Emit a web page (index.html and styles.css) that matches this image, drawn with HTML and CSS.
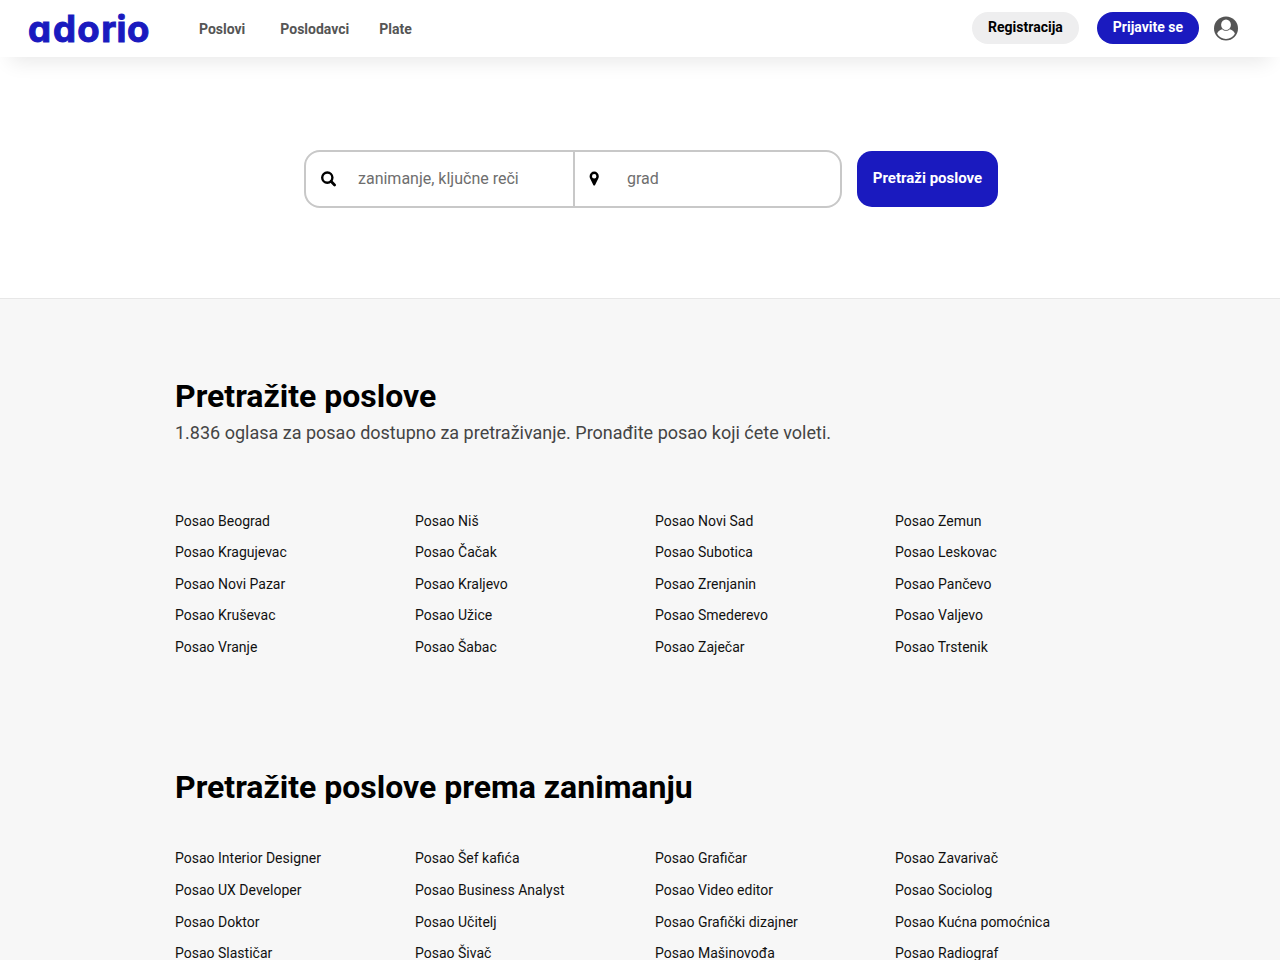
FILE: index.html
```html
<!DOCTYPE html>
<html lang="sr">
<head>
    <meta charset="UTF-8">
    <meta name="viewport" content="width=device-width, initial-scale=1.0">
    <title>Adorio - Poslovi</title>
    <link rel="stylesheet" href="styles.css">
</head>
<body>
    <header class="header">
        <a class="logo" href="#">
            <svg width="124" height="48" viewBox="0 0 124 48">
                <text class="logo-text" x="1.1 26 50.200 74.200 89.500 99.900" y="37.500">adorio</text>
            </svg>
        </a>
        <nav class="nav">
            <a class="nav-jobs" href="#">Poslovi</a>
            <a href="#">Poslodavci</a>
            <a href="#">Plate</a>
        </nav>
        <div class="account">
            <a class="pill pill-light" href="#">Registracija</a>
            <a class="pill pill-blue" href="#">Prijavite se</a>
            <svg class="avatar" width="24" height="25" viewBox="0 0 24 25">
                <circle cx="12" cy="12.4" r="12" fill="#555"/>
                <ellipse cx="12" cy="8.8" rx="4.9" ry="5.3" fill="#fff"/>
                <path d="M8.200 13.200c1.100 1 2.300 1.500 3.800 1.500s2.700-.5 3.800-1.500c2.600.7 4.600 2.400 5.100 4.600A10.400 10.400 0 0 1 12 22.900a10.400 10.400 0 0 1-8.900-5.100c.5-2.200 2.500-3.900 5.100-4.600z" fill="#fff"/>
            </svg>
        </div>
    </header>

    <section class="search">
        <form class="search-form">
            <div class="fields">
                <label class="field field-job">
                    <svg class="icon-search" width="16" height="16" viewBox="0 0 16 16">
                        <circle cx="6.300" cy="6.600" r="5.100" fill="none" stroke="#000" stroke-width="2.400"/>
                        <path d="M10 10.300l3.600 3.600" stroke="#000" stroke-width="2.800" stroke-linecap="round"/>
                    </svg>
                    <input type="text" placeholder="zanimanje, ključne reči">
                </label>
                <label class="field field-city">
                    <svg class="icon-pin" width="10" height="16" viewBox="0 0 10 16">
                        <path d="M5.200.6A4.600 4.600 0 0 0 .6 5.200c0 .7.100 1.400.4 2l3.300 6.800c.4.700 1.400.7 1.800 0l3.300-6.800c.3-.6.400-1.300.4-2A4.600 4.600 0 0 0 5.200.6zm0 2.400a2.200 2.200 0 1 1 0 4.400 2.200 2.200 0 0 1 0-4.400z" fill-rule="evenodd"/>
                    </svg>
                    <input type="text" placeholder="grad">
                </label>
            </div>
            <button class="search-button" type="button">Pretraži poslove</button>
        </form>
    </section>

    <main class="content">
        <section class="container cities">
            <h2>Pretražite poslove</h2>
            <p class="lead">1.836 oglasa za posao dostupno za pretraživanje. Pronađite posao koji ćete voleti.</p>
            <div class="links">
                <a href="#">Posao Beograd</a>
                <a href="#">Posao Niš</a>
                <a href="#">Posao Novi Sad</a>
                <a href="#">Posao Zemun</a>
                <a href="#">Posao Kragujevac</a>
                <a href="#">Posao Čačak</a>
                <a href="#">Posao Subotica</a>
                <a href="#">Posao Leskovac</a>
                <a href="#">Posao Novi Pazar</a>
                <a href="#">Posao Kraljevo</a>
                <a href="#">Posao Zrenjanin</a>
                <a href="#">Posao Pančevo</a>
                <a href="#">Posao Kruševac</a>
                <a href="#">Posao Užice</a>
                <a href="#">Posao Smederevo</a>
                <a href="#">Posao Valjevo</a>
                <a href="#">Posao Vranje</a>
                <a href="#">Posao Šabac</a>
                <a href="#">Posao Zaječar</a>
                <a href="#">Posao Trstenik</a>
            </div>
        </section>

        <section class="container professions">
            <h2>Pretražite poslove prema zanimanju</h2>
            <div class="links">
                <a href="#">Posao Interior Designer</a>
                <a href="#">Posao Šef kafića</a>
                <a href="#">Posao Grafičar</a>
                <a href="#">Posao Zavarivač</a>
                <a href="#">Posao UX Developer</a>
                <a href="#">Posao Business Analyst</a>
                <a href="#">Posao Video editor</a>
                <a href="#">Posao Sociolog</a>
                <a href="#">Posao Doktor</a>
                <a href="#">Posao Učitelj</a>
                <a href="#">Posao Grafički dizajner</a>
                <a href="#">Posao Kućna pomoćnica</a>
                <a href="#">Posao Slastičar</a>
                <a href="#">Posao Šivač</a>
                <a href="#">Posao Mašinovođa</a>
                <a href="#">Posao Radiograf</a>
            </div>
        </section>
    </main>
</body>
</html>
```

FILE: styles.css
```css
* {
    box-sizing: border-box;
}
body {
    margin: 0;
    height: 960px;
    overflow: hidden;
    font-family: Roboto, "Liberation Sans", sans-serif;
    font-size: 14px;
    color: #000;
    background-color: #fff;
}
a {
    color: inherit;
    text-decoration: none;
}
.header {
    display: flex;
    align-items: center;
    height: 57px;
    padding: 0 42px 0 27px;
    background-color: #fff;
    box-shadow: 0 15px 20px -10px rgba(0,0,0,0.09);
}
.logo {
    display: flex;
    margin-bottom: 2px;
}
.logo-text {
    font-family: Inter, sans-serif;
    font-size: 36.5px;
    font-weight: 700;
    font-feature-settings: "cv11";
    fill: #1a1abf;
    stroke: #1a1abf;
    stroke-width: 1px;
}
.nav {
    display: flex;
    gap: 30px;
    margin-left: 48px;
    padding-top: 1px;
    font-weight: 700;
    color: #555;
}
.nav-jobs {
    margin-right: 5px;
}
.account {
    display: flex;
    align-items: center;
    margin-left: auto;
}
.pill {
    height: 32px;
    margin-bottom: 1px;
    padding: 0 16px;
    border-radius: 16px;
    font-weight: 700;
    line-height: 31px;
}
.pill-light {
    margin-right: 18px;
    background-color: #eeeeef;
}
.pill-blue {
    margin-right: 15px;
    color: #fff;
    background-color: #1a1abf;
}
.search {
    height: 242px;
    padding: 93px 0 0 304px;
    border-bottom: 1px solid #e7e7e7;
}
.search-form {
    display: flex;
    align-items: center;
    gap: 15px;
}
.fields {
    display: flex;
    width: 538px;
    height: 58px;
    border: 2px solid #c8c8c8;
    border-radius: 16px;
}
.field {
    display: flex;
    align-items: center;
}
.field-job {
    width: 269px;
    padding-left: 15px;
    border-right: 2px solid #c8c8c8;
}
.field-city {
    flex: 1;
    padding-left: 14px;
}
.field input {
    flex: 1;
    min-width: 0;
    padding: 0 0 2px;
    border: none;
    outline: none;
    background: none;
    font-family: inherit;
    font-size: 16px;
}
.field input::placeholder {
    color: #6e6e6e;
}
.icon-search {
    margin-right: 21px;
}
.icon-pin {
    margin-right: 28px;
}
.search-button {
    width: 141px;
    height: 56px;
    padding: 0 0 2px;
    border: none;
    border-radius: 15px;
    font-family: inherit;
    font-size: 15px;
    font-weight: 700;
    color: #fff;
    background-color: #1a1abf;
}
.content {
    background-color: #f7f7f7;
}
.container {
    width: 960px;
    margin: 0 auto;
    padding: 0 0 0 15px;
}
.cities {
    padding-top: 77px;
}
.professions {
    padding-top: 103.6px;
}
h2 {
    margin: 0;
    font-size: 32px;
    font-weight: 700;
    line-height: 40px;
}
.lead {
    margin: 4px 0 59.9px;
    font-size: 18px;
    line-height: 26px;
    color: #444;
}
.links {
    display: grid;
    grid-template-columns: repeat(4, 240px);
    grid-auto-rows: 31.5px;
    line-height: 31.5px;
    color: #111;
}
.professions .links {
    grid-auto-rows: 31.6px;
    margin-top: 36.4px;
}
```
